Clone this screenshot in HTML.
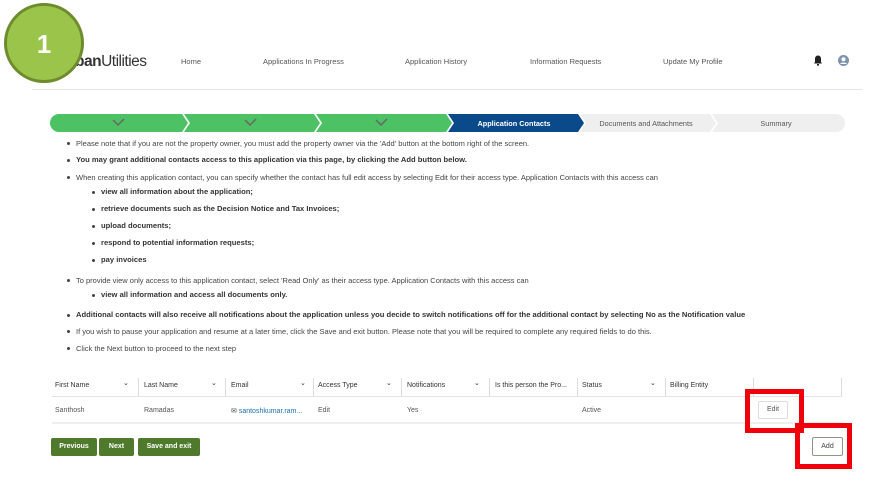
<!DOCTYPE html>
<html><head><style>
*{margin:0;padding:0;box-sizing:border-box}
body{width:871px;height:495px;background:#fff;font-family:"Liberation Sans",sans-serif;position:relative;overflow:hidden;color:#333}
.a{position:absolute;white-space:nowrap}
.nav{font-size:7.5px;color:#555;top:57px}
.t{font-size:7.5px;color:#444}
.b{font-size:7.6px;font-weight:bold;color:#333}
.dot{position:absolute;width:3px;height:3px;border-radius:50%;background:#444}
.th{font-size:7px;color:#333;top:382px}
.td{font-size:7px;color:#555;top:407px}
.btn{position:absolute;top:438px;height:18px;background:#4f7a2c;color:#fff;font-size:7px;font-weight:bold;text-align:center;line-height:18px;border-radius:2px}
</style></head><body>
<div class="a" style="left:75px;top:53px;font-size:15.5px;color:#333;letter-spacing:-0.5px"><b>ban</b>Utilities</div>
<div class="a nav" style="left:181px">Home</div>
<div class="a nav" style="left:263px">Applications In Progress</div>
<div class="a nav" style="left:405px">Application History</div>
<div class="a nav" style="left:530px">Information Requests</div>
<div class="a nav" style="left:663px">Update My Profile</div>
<svg class="a" style="left:813px;top:55px" width="10" height="11" viewBox="0 0 10 11"><path d="M5 0.5C3 0.5 2 2 2 4v3L1 8.5h8L8 7V4C8 2 7 0.5 5 0.5z" fill="#222"/><rect x="4" y="9" width="2" height="1.6" fill="#222"/></svg>
<svg class="a" style="left:838px;top:55px" width="11" height="11"><circle cx="5.5" cy="5.5" r="5.5" fill="#7e93ad"/><circle cx="5.5" cy="4.2" r="2" fill="#fff"/><path d="M2 9c1-2 6-2 7 0" fill="#fff"/></svg>
<div class="a" style="left:32px;top:89px;width:830px;height:1px;background:#e5e5e5"></div>
<svg class="a" style="left:50px;top:114px" width="795" height="18" viewBox="0 0 795 18">
<path d="M9 0H132L138 9L132 18H9A9 9 0 0 1 9 0z" fill="#4cc264"/>
<path d="M134 0H264L270 9L264 18H134L140 9z" fill="#4cc264"/>
<path d="M266 0H396L402 9L396 18H266L272 9z" fill="#4cc264"/>
<path d="M398 0H528L534 9L528 18H398L404 9z" fill="#0b4a8a"/>
<path d="M530 0H660L666 9L660 18H530L536 9z" fill="#efefef"/>
<path d="M662 0H786A9 9 0 0 1 786 18H662L668 9z" fill="#efefef"/>
<path d="M63 6l5 5 6-6M195 6l5 5 6-6M326 6l5 5 6-6" stroke="#666" stroke-width="1.5" fill="none"/>
<text x="464" y="12" font-size="7.3" font-weight="bold" fill="#fff" text-anchor="middle" font-family="Liberation Sans">Application Contacts</text>
<text x="596" y="12" font-size="7.3" fill="#555" text-anchor="middle" font-family="Liberation Sans">Documents and Attachments</text>
<text x="726" y="12" font-size="7.3" fill="#555" text-anchor="middle" font-family="Liberation Sans">Summary</text>
</svg>
<div class="dot" style="left:67px;top:142px"></div><div class="a t" style="left:76px;top:139px">Please note that if you are not the property owner, you must add the property owner via the 'Add' button at the bottom right of the screen.</div>
<div class="dot" style="left:67px;top:159px"></div><div class="a b" style="left:76px;top:155px">You may grant additional contacts access to this application via this page, by clicking the Add button below.</div>
<div class="dot" style="left:67px;top:176px"></div><div class="a t" style="left:76px;top:173px">When creating this application contact, you can specify whether the contact has full edit access by selecting Edit for their access type. Application Contacts with this access can</div>
<div class="dot" style="left:92px;top:191px"></div><div class="a b" style="left:101px;top:187px">view all information about the application;</div>
<div class="dot" style="left:92px;top:208px"></div><div class="a b" style="left:101px;top:204px">retrieve documents such as the Decision Notice and Tax Invoices;</div>
<div class="dot" style="left:92px;top:225px"></div><div class="a b" style="left:101px;top:221px">upload documents;</div>
<div class="dot" style="left:92px;top:242px"></div><div class="a b" style="left:101px;top:238px">respond to potential information requests;</div>
<div class="dot" style="left:92px;top:259px"></div><div class="a b" style="left:101px;top:255px">pay invoices</div>
<div class="dot" style="left:67px;top:279px"></div><div class="a t" style="left:76px;top:276px">To provide view only access to this application contact, select 'Read Only' as their access type. Application Contacts with this access can</div>
<div class="dot" style="left:92px;top:294px"></div><div class="a b" style="left:101px;top:290px">view all information and access all documents only.</div>
<div class="dot" style="left:67px;top:314px"></div><div class="a b" style="left:76px;top:310px">Additional contacts will also receive all notifications about the application unless you decide to switch notifications off for the additional contact by selecting No as the Notification value</div>
<div class="dot" style="left:67px;top:330px"></div><div class="a t" style="left:76px;top:327px">If you wish to pause your application and resume at a later time, click the Save and exit button. Please note that you will be required to complete any required fields to do this.</div>
<div class="dot" style="left:67px;top:347px"></div><div class="a t" style="left:76px;top:344px">Click the Next button to proceed to the next step</div>

<div class="a th" style="left:55px">First Name</div><div class="a th" style="left:123px;top:379px">⌄</div>
<div class="a th" style="left:144px">Last Name</div><div class="a th" style="left:211px;top:379px">⌄</div>
<div class="a th" style="left:231px">Email</div><div class="a th" style="left:300px;top:379px">⌄</div>
<div class="a th" style="left:318px">Access Type</div><div class="a th" style="left:386px;top:379px">⌄</div>
<div class="a th" style="left:407px">Notifications</div><div class="a th" style="left:474px;top:379px">⌄</div>
<div class="a th" style="left:495px">Is this person the Pro...</div>
<div class="a th" style="left:582px">Status</div><div class="a th" style="left:650px;top:379px">⌄</div>
<div class="a th" style="left:670px">Billing Entity</div>
<div class="a" style="left:138px;top:378px;width:1px;height:18px;background:#ddd"></div>
<div class="a" style="left:225px;top:378px;width:1px;height:18px;background:#ddd"></div>
<div class="a" style="left:313px;top:378px;width:1px;height:18px;background:#ddd"></div>
<div class="a" style="left:401px;top:378px;width:1px;height:18px;background:#ddd"></div>
<div class="a" style="left:489px;top:378px;width:1px;height:18px;background:#ddd"></div>
<div class="a" style="left:577px;top:378px;width:1px;height:18px;background:#ddd"></div>
<div class="a" style="left:665px;top:378px;width:1px;height:18px;background:#ddd"></div>
<div class="a" style="left:753px;top:378px;width:1px;height:18px;background:#ddd"></div>
<div class="a" style="left:841px;top:378px;width:1px;height:18px;background:#ddd"></div>
<div class="a" style="left:52px;top:396px;width:790px;height:1px;background:#e3e3e3"></div>
<div class="a td" style="left:55px">Santhosh</div>
<div class="a td" style="left:144px">Ramadas</div>
<div class="a td" style="left:231px;color:#1a6fb0"><span style="color:#444">✉</span> santoshkumar.ram...</div>
<div class="a td" style="left:318px">Edit</div>
<div class="a td" style="left:407px">Yes</div>
<div class="a td" style="left:582px">Active</div>
<div class="a" style="left:758px;top:401px;width:30px;height:18px;border:1px solid #ddd;border-radius:2px;font-size:7px;color:#555;text-align:center;line-height:16px">Edit</div>
<div class="a" style="left:52px;top:422px;width:790px;height:2px;background:#eee"></div>
<div class="btn" style="left:51px;width:46px">Previous</div>
<div class="btn" style="left:99px;width:35px">Next</div>
<div class="btn" style="left:138px;width:62px">Save and exit</div>
<div class="a" style="left:812px;top:437px;width:31px;height:19px;border:1px solid #8a9a80;border-radius:2px;font-size:7px;color:#444;text-align:center;line-height:17px">Add</div>
<div class="a" style="left:745px;top:389px;width:59px;height:44px;border:5px solid #f0000a"></div>
<div class="a" style="left:795px;top:423px;width:57px;height:46px;border:5px solid #f0000a"></div>
<div class="a" style="left:4px;top:3px;width:80px;height:80px;border-radius:50%;background:#9bc54a;border:3px solid #6e8c2e;color:#fff;font-size:26px;font-weight:bold;text-align:center;line-height:76px">1</div>
</body></html>
